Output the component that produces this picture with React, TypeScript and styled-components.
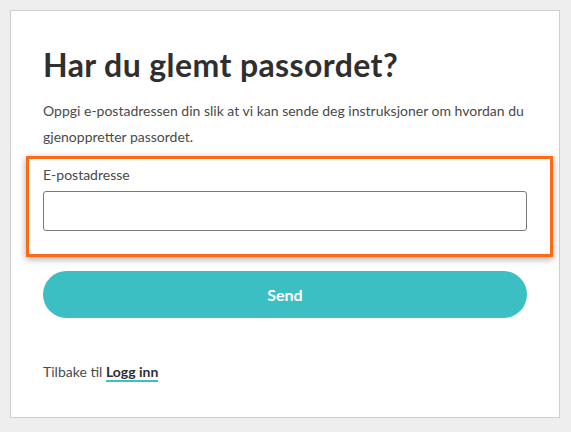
import React from 'react'
import styled, { createGlobalStyle } from 'styled-components'

const GlobalStyle = createGlobalStyle`
  body {
    margin: 0;
    background: #eeeeee;
    font-family: Lato, "Open Sans", sans-serif;
  }
`

const App = () => {
  return (
    <>
      <GlobalStyle />
      <Page>
        <Card>
          <Title>Har du glemt passordet?</Title>
          <Intro>
            Oppgi e-postadressen din slik at vi kan sende deg instruksjoner om hvordan du
            gjenoppretter passordet.
          </Intro>
          <FieldGroup>
            <Label htmlFor="email">E-postadresse</Label>
            <Input id="email" type="email" />
          </FieldGroup>
          <SendButton type="button">Send</SendButton>
          <Back>
            Tilbake til <BackLink href="#">Logg inn</BackLink>
          </Back>
        </Card>
      </Page>
    </>
  )
}

export default App

const Page = styled.div`
  padding: 10px;
`

const Card = styled.div`
  box-sizing: border-box;
  width: 550px;
  height: 408px;
  background: #fff;
  border: 1px solid #cfcfcf;
  padding: 36px 32px 0 32px;
  display: flex;
  flex-direction: column;
`

const Title = styled.h1`
  margin: 0;
  font-size: 32px;
  line-height: 36px;
  letter-spacing: 0.4px;
  font-weight: 700;
  color: #2f2f2f;
`

const Intro = styled.p`
  margin: 14.5px 0 0 0;
  font-size: 14px;
  line-height: 26px;
  color: #4a4a4a;
`

const FieldGroup = styled.div`
  margin: 6.5px -26px 0 -17px;
  padding: 5.5px 23px 23px 14px;
  border: 3px solid #fd6a16;
  box-shadow: 0 2px 7px rgba(0, 0, 0, 0.35);
  display: flex;
  flex-direction: column;
`

const Label = styled.label`
  font-size: 14px;
  line-height: 20px;
  color: #4a4a4a;
`

const Input = styled.input`
  box-sizing: border-box;
  margin-top: 6.5px;
  height: 40px;
  width: 100%;
  border: 1px solid #7a7a7a;
  border-radius: 3px;
  background: #fff;
  font-family: inherit;
  font-size: 14px;
  padding: 0 10px;
`

const SendButton = styled.button`
  margin-top: 14px;
  height: 47px;
  width: 100%;
  border: none;
  border-radius: 24px;
  background: #3bbfc3;
  color: #fff;
  font-family: inherit;
  font-size: 16px;
  font-weight: 700;
  cursor: pointer;
`

const Back = styled.div`
  margin-top: 43.5px;
  font-size: 14px;
  line-height: 20px;
  color: #4a4a4a;
`

const BackLink = styled.a`
  color: #2f2f2f;
  font-weight: 700;
  text-decoration: none;
  border-bottom: 2px solid #3bbfc3;
`
